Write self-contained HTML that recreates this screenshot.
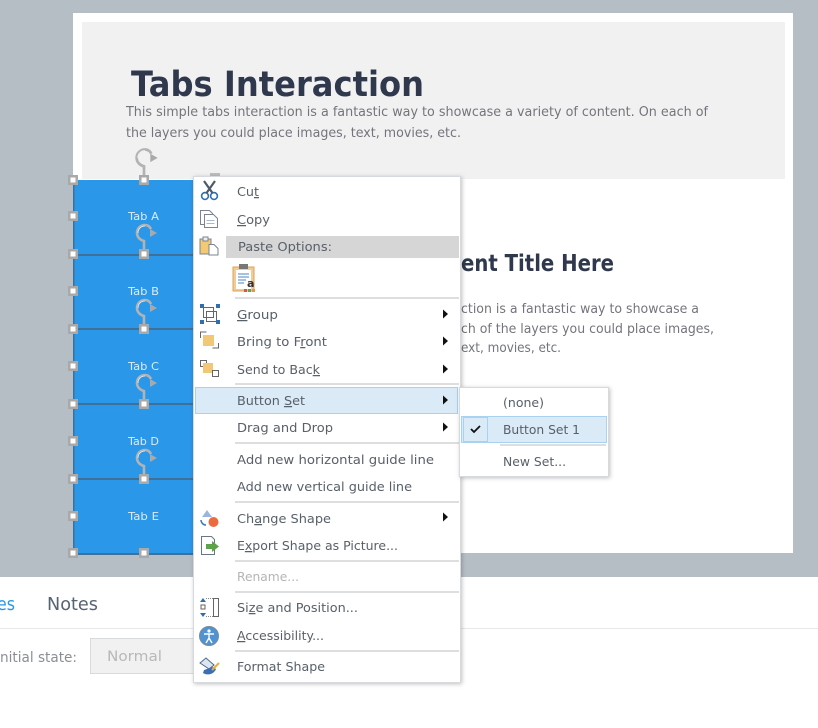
<!DOCTYPE html>
<html><head><meta charset="utf-8"><style>
html,body{margin:0;padding:0;background:#fff;width:818px;height:728px;overflow:hidden}
svg{display:block;filter:blur(.35px)}
text{font-family:"DejaVu Sans","Liberation Sans",sans-serif}
.m{font-size:12.500px;fill:#586069}
.p{font-size:13.500px;fill:#72757b}
.h{font-weight:bold;fill:#2f384c}
.t{font-size:11px;fill:#dcebf8}
.s{stroke:#d2d4d6;stroke-width:1.5}
</style></head><body>
<svg width="818" height="728" viewBox="0 0 818 728">
<defs>
<filter id="sh" x="-10%" y="-10%" width="120%" height="120%"><feDropShadow dx="1" dy="1" stdDeviation="2" flood-color="#000" flood-opacity=".25"/></filter>
<g id="hd"><rect x="-5" y="-5" width="10" height="10" fill="#a9a9a9"/><rect x="-2.500" y="-2.500" width="5" height="5" fill="#fff"/></g>
<g id="rot" fill="none"><path d="M0 0V-13C-4-14-7-17-7-21C-7-26-3-29 1-29C4-29 6-27 7-25" stroke="#b3b3b3" stroke-width="2.600"/><path d="M-6-21C-6-25-3-28 1-28" stroke="#eee" stroke-width=".8"/><path d="M6-25L13-21L6-17Z" fill="#a9a9a9"/></g>
<path id="arr" d="M0-4.500L5 0L0 4.500Z" fill="#111"/>
</defs>
<rect width="818" height="728" fill="#fff"/>
<rect width="818" height="577" fill="#b6bec5"/>
<rect x="73" y="13" width="720" height="540" fill="#fff"/>
<rect x="82" y="22" width="703" height="157" fill="#f1f1f1"/>
<text class="h" x="131" y="96" font-size="35" textLength="293" lengthAdjust="spacingAndGlyphs">Tabs Interaction</text>
<text class="p" x="126" y="116" textLength="582" lengthAdjust="spacingAndGlyphs">This simple tabs interaction is a fantastic way to showcase a variety of content. On each of</text>
<text class="p" x="126" y="137" textLength="335" lengthAdjust="spacingAndGlyphs">the layers you could place images, text, movies, etc.</text>
<text class="h" x="461" y="271" font-size="23" textLength="153" lengthAdjust="spacingAndGlyphs">ent Title Here</text>
<text class="p" x="461" y="313" textLength="238" lengthAdjust="spacingAndGlyphs">ction is a fantastic way to showcase a</text>
<text class="p" x="461" y="333" textLength="253" lengthAdjust="spacingAndGlyphs">ch of the layers you could place images,</text>
<text class="p" x="461" y="352" textLength="100" lengthAdjust="spacingAndGlyphs">ext, movies, etc.</text>

<rect x="73" y="180" width="125" height="375" fill="#2a97e8"/>
<g fill="#3f709a"><rect x="73" y="254" width="125" height="2"/><rect x="73" y="328" width="125" height="2"/><rect x="73" y="403" width="125" height="2"/><rect x="73" y="478" width="125" height="2"/><rect x="73" y="553" width="125" height="2"/><rect x="73" y="180" width="1.500" height="375"/></g>
<text class="t" x="128" y="220" textLength="31" lengthAdjust="spacingAndGlyphs">Tab A</text>
<text class="t" x="128" y="295" textLength="31" lengthAdjust="spacingAndGlyphs">Tab B</text>
<text class="t" x="128" y="370" textLength="31" lengthAdjust="spacingAndGlyphs">Tab C</text>
<text class="t" x="128" y="445" textLength="31" lengthAdjust="spacingAndGlyphs">Tab D</text>
<text class="t" x="128" y="520" textLength="31" lengthAdjust="spacingAndGlyphs">Tab E</text>

<use href="#rot" x="144" y="179" transform="translate(-7.200,-8) scale(1.050)" />
<use href="#rot" x="144" y="254"/><use href="#rot" x="144" y="329"/><use href="#rot" x="144" y="404"/><use href="#rot" x="144" y="479"/>
<use href="#hd" x="73" y="180"/><use href="#hd" x="144" y="180"/>
<use href="#hd" x="73" y="216"/><use href="#hd" x="73" y="254"/><use href="#hd" x="144" y="254"/>
<use href="#hd" x="73" y="291"/><use href="#hd" x="73" y="329"/><use href="#hd" x="144" y="329"/>
<use href="#hd" x="73" y="366"/><use href="#hd" x="73" y="404"/><use href="#hd" x="144" y="404"/>
<use href="#hd" x="73" y="441"/><use href="#hd" x="73" y="479"/><use href="#hd" x="144" y="479"/>
<use href="#hd" x="73" y="516"/><use href="#hd" x="73" y="553"/><use href="#hd" x="144" y="553"/>

<!-- bottom panel -->
<text x="-3" y="610" font-size="18" fill="#2a97e8" textLength="18" lengthAdjust="spacingAndGlyphs">es</text>
<text x="47" y="610" font-size="18" fill="#566472" textLength="51" lengthAdjust="spacingAndGlyphs">Notes</text>
<rect x="0" y="628" width="818" height="1" fill="#e6e8ea"/>
<text x="0" y="662" font-size="14" fill="#8b8f94" textLength="77" lengthAdjust="spacingAndGlyphs">nitial state:</text>
<rect x="90.500" y="638.500" width="110" height="35" fill="#f1f1f1" stroke="#d8dbde"/>
<text x="107" y="661" font-size="14.500" fill="#b8b8b8" textLength="55" lengthAdjust="spacingAndGlyphs">Normal</text>

<!-- main menu -->
<rect x="210" y="173" width="10" height="4" fill="#bdbdbd"/>
<rect x="193.500" y="176.500" width="267" height="506" fill="#fff" stroke="#d6dade" filter="url(#sh)"/>
<rect x="226" y="236" width="233" height="22" fill="#d6d6d6"/>
<g class="s"><line x1="235" x2="459" y1="298" y2="298"/><line x1="235" x2="459" y1="384" y2="384"/><line x1="235" x2="459" y1="443" y2="443"/><line x1="235" x2="459" y1="502" y2="502"/><line x1="235" x2="459" y1="561" y2="561"/><line x1="235" x2="459" y1="592" y2="592"/><line x1="235" x2="459" y1="651" y2="651"/></g>
<rect x="195.500" y="387.500" width="262" height="26" fill="#dbeaf7" stroke="#a9d1f0"/>

<text class="m" x="237" y="196" textLength="22" lengthAdjust="spacingAndGlyphs">Cu<tspan text-decoration="underline">t</tspan></text>
<text class="m" x="237" y="224" textLength="33" lengthAdjust="spacingAndGlyphs"><tspan text-decoration="underline">C</tspan>opy</text>
<text class="m" x="238" y="251" textLength="94" lengthAdjust="spacingAndGlyphs">Paste Options:</text>
<text class="m" x="237" y="319" textLength="41" lengthAdjust="spacingAndGlyphs"><tspan text-decoration="underline">G</tspan>roup</text>
<text class="m" x="237" y="346" textLength="90" lengthAdjust="spacingAndGlyphs">Bring to F<tspan text-decoration="underline">r</tspan>ont</text>
<text class="m" x="237" y="374" textLength="83" lengthAdjust="spacingAndGlyphs">Send to Bac<tspan text-decoration="underline">k</tspan></text>
<text class="m" x="237" y="405" textLength="68" lengthAdjust="spacingAndGlyphs">Button <tspan text-decoration="underline">S</tspan>et</text>
<text class="m" x="237" y="432" textLength="96" lengthAdjust="spacingAndGlyphs">Drag and Drop</text>
<text class="m" x="237" y="464" textLength="197" lengthAdjust="spacingAndGlyphs">Add new horizontal guide line</text>
<text class="m" x="237" y="491" textLength="175" lengthAdjust="spacingAndGlyphs">Add new vertical guide line</text>
<text class="m" x="237" y="523" textLength="94" lengthAdjust="spacingAndGlyphs">Ch<tspan text-decoration="underline">a</tspan>nge Shape</text>
<text class="m" x="237" y="550" textLength="161" lengthAdjust="spacingAndGlyphs">E<tspan text-decoration="underline">x</tspan>port Shape as Picture...</text>
<text class="m" x="237" y="581" textLength="62" lengthAdjust="spacingAndGlyphs" style="fill:#b5b5b5">Rename...</text>
<text class="m" x="237" y="612" textLength="121" lengthAdjust="spacingAndGlyphs">Si<tspan text-decoration="underline">z</tspan>e and Position...</text>
<text class="m" x="237" y="640" textLength="87" lengthAdjust="spacingAndGlyphs"><tspan text-decoration="underline">A</tspan>ccessibility...</text>
<text class="m" x="237" y="671" textLength="88" lengthAdjust="spacingAndGlyphs">Format Shape</text>

<use href="#arr" x="443" y="314"/><use href="#arr" x="443" y="341"/><use href="#arr" x="443" y="369"/><use href="#arr" x="443" y="400"/><use href="#arr" x="443" y="427"/><use href="#arr" x="443" y="517"/>

<!-- icons -->
<g fill="none" stroke="#44617f" stroke-width="1.600"><circle cx="205" cy="196" r="3.400" stroke="#2f6fb0"/><circle cx="214" cy="196" r="3.400" stroke="#2f6fb0"/><path d="M206.500 193L215 181M212.500 193L204 181" stroke="#4f5a66" stroke-width="2.200"/></g>
<g fill="#fff" stroke="#7b8490"><path d="M200.500 210.500h9l3 3v11h-12z"/><path d="M204.500 214.500h9l4 4v9h-13z"/><path d="M206.500 220.500h8M206.500 223.500h8" stroke="#a9b9ce"/></g>
<g><rect x="200" y="239" width="11" height="15" fill="#f3c974" stroke="#7b8490"/><rect x="203" y="237" width="5" height="4" fill="#eee" stroke="#7b8490"/><path d="M209 244.500h5l4 4v6.500h-9z" fill="#fff" stroke="#7b8490"/></g>
<g><rect x="233" y="267" width="21" height="24" fill="#f0cd96" stroke="#dca35a"/><rect x="236" y="270" width="15" height="19" fill="#fff"/><rect x="239" y="264" width="9" height="5" fill="#777"/><path d="M238 274h11M238 277h11M238 280h8M238 283h6" stroke="#4d86c6"/><text x="247" y="287" font-size="11" font-weight="bold" fill="#333">a</text><rect x="244" y="289" width="3" height="3" fill="#d35b3d"/><rect x="248" y="289" width="3" height="3" fill="#5da362"/><rect x="252" y="289" width="3" height="3" fill="#e8983b"/></g>
<g><g fill="none" stroke="#666"><rect x="203.500" y="307.500" width="10" height="10"/><rect x="206.500" y="311.500" width="10" height="10"/></g><g fill="#2f6fb0"><rect x="200" y="304" width="4" height="4"/><rect x="216" y="304" width="4" height="4"/><rect x="200" y="320" width="4" height="4"/><rect x="216" y="320" width="4" height="4"/></g></g>
<g fill="none" stroke="#666"><path d="M200.500 338v-6h6M218.500 343v5h-6"/><rect x="203" y="335" width="11" height="11" fill="#f0c878" stroke="none"/></g>
<g><rect x="200.500" y="360.500" width="6" height="6" fill="#fff" stroke="#666"/><rect x="203" y="363" width="10" height="10" fill="#f0c878"/><rect x="212.500" y="370.500" width="6" height="6" fill="#fff" stroke="#666"/></g>
<g><path d="M207 510l5 7h-10z" fill="#9db5dc"/><path d="M201 520a5 5 0 0 0 5 5" fill="none" stroke="#3a78c0" stroke-width="1.500"/><circle cx="213.500" cy="522" r="5" fill="#ec6a3d"/></g>
<g><path d="M201.500 536.500h10l3 3v15h-13z" fill="#fff" stroke="#6b7680"/><path d="M206 544h6v-3l7 5.500l-7 5.500v-3h-6z" fill="#5ea24a"/></g>
<g><path d="M203 598l-3 4h6zM203 617l-3-4h6z" fill="#2f6fb0"/><rect x="201" y="605" width="4" height="4" fill="none" stroke="#666"/><path d="M206 598.500h8M206 616.500h8" stroke="#888" stroke-dasharray="1 1"/><rect x="213.500" y="598.500" width="5" height="18" fill="#fff" stroke="#666"/></g>
<g><circle cx="209" cy="636" r="9.500" fill="#4f93d2" stroke="#7a8a98"/><circle cx="209" cy="631" r="1.600" fill="#fff"/><path d="M204 634h10M209 634v4l-3 5M209 638l3 5" stroke="#fff" stroke-width="1.400" fill="none"/></g>
<g><path d="M200 663l6-5l8 7l-5 4z" fill="#dbe6f2" stroke="#4f6a88"/><path d="M204 670l9-3l3 2c-2 5-8 7-13 4z" fill="#3a6fb5"/><path d="M212 670l7-7" stroke="#e3b13b" stroke-width="2"/></g>

<!-- submenu -->
<rect x="459.500" y="387.500" width="149" height="89" fill="#fff" stroke="#d6dade" filter="url(#sh)"/>
<rect x="461.500" y="416.500" width="145" height="26" fill="#dbeaf7" stroke="#a9d1f0"/>
<rect x="463.500" y="417.500" width="24" height="24" fill="#dbeaf7" stroke="#a9d1f0"/>
<path d="M471 429l3 3l6-6" fill="none" stroke="#111" stroke-width="1.800"/>
<line x1="500" x2="606" y1="445" y2="445" class="s"/>
<text class="m" x="503" y="407" textLength="41" lengthAdjust="spacingAndGlyphs">(none)</text>
<text class="m" x="503" y="434" textLength="77" lengthAdjust="spacingAndGlyphs">Button Set 1</text>
<text class="m" x="503" y="466" textLength="63" lengthAdjust="spacingAndGlyphs">New Set...</text>
</svg>
</body></html>
